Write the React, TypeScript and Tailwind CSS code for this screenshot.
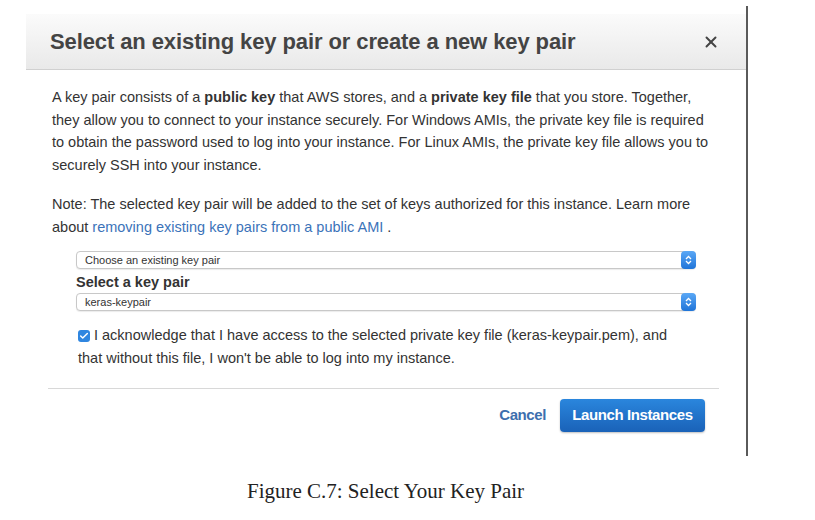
import { Check, X } from 'lucide-react'

function SelectBox({ value }: { value: string }) {
  return (
    <div className="flex h-[18px] w-[620px] items-center rounded-[4px] border border-[#c8c8c8] bg-white shadow-[0_1px_1px_rgba(0,0,0,0.08)]">
      <span className="flex-1 pl-[8px] text-[11px] leading-none text-[#333]">{value}</span>
      <span className="flex h-[18px] w-[15px] flex-col items-center justify-center rounded-[4px] bg-gradient-to-b from-[#5aa8f6] to-[#1e74d8] -mr-px">
        <svg width="7" height="10" viewBox="0 0 7 10" fill="none" stroke="white" strokeWidth="1.3">
          <path d="M1 4 L3.5 1.5 L6 4" />
          <path d="M1 6 L3.5 8.5 L6 6" />
        </svg>
      </span>
    </div>
  )
}

export default function App() {
  return (
    <div className="relative h-[520px] w-[815px] overflow-hidden bg-white font-['Liberation_Sans',Arial,sans-serif] text-[#333]">
      <div className="ml-[26px] mt-[6px] w-[722px] border-r-2 border-[#5a5a5a] pt-[8px] pb-[24px]">
        <div className="flex h-[56px] w-[720px] items-center justify-between border-b border-[#d0d0d0] bg-gradient-to-b from-[#fbfbfb] to-[#e9e9e9] pl-[24px] pr-[26px]">
          <h1 className="text-[22px] font-bold tracking-[-0.1px] text-[#444]">Select an existing key pair or create a new key pair</h1>
          <X size={18} strokeWidth={2.6} className="text-[#444]" />
        </div>

        <div className="pl-[26px] pr-[20px] pt-[16px] text-[14.5px] leading-[22.5px] whitespace-nowrap">
          <p>
            A key pair consists of a <b>public key</b> that AWS stores, and a <b>private key file</b> that you store. Together,
            <br />
            they allow you to connect to your instance securely. For Windows AMIs, the private key file is required
            <br />
            to obtain the password used to log into your instance. For Linux AMIs, the private key file allows you to
            <br />
            securely SSH into your instance.
          </p>
          <p className="mt-[17px]">
            Note: The selected key pair will be added to the set of keys authorized for this instance. Learn more
            <br />
            about <span className="text-[#3b73b9]">removing existing key pairs from a public AMI</span> .
          </p>

          <div className="mt-[13px] pl-[24px]">
            <SelectBox value="Choose an existing key pair" />
            <div className="mt-[4px] text-[14.5px] font-bold leading-[18px] text-[#333]">Select a key pair</div>
            <div className="mt-[2px]">
              <SelectBox value="keras-keypair" />
            </div>
          </div>

          <div className="mt-[13px] pl-[26px]">
            <span className="mr-[4px] inline-flex h-[12px] w-[12px] translate-y-[1px] items-center justify-center rounded-[3px] bg-[#2f86e0]">
              <Check size={10} strokeWidth={3.5} className="text-white" />
            </span>
            I acknowledge that I have access to the selected private key file (keras-keypair.pem), and
            <br />
            that without this file, I won't be able to log into my instance.
          </div>

          <div className="mt-[19px] -ml-[4px] mr-[7px] border-t border-[#d8d8d8]" />

          <div className="mt-[10px] flex items-center justify-end gap-[14px] pr-[21px]">
            <span className="text-[15px] font-bold tracking-[-0.4px] text-[#3d6fae]">Cancel</span>
            <span className="flex h-[33px] w-[145px] items-center justify-center rounded-[4px] bg-gradient-to-b from-[#2a86dd] to-[#1a62b8] text-[15px] font-bold tracking-[-0.4px] text-white shadow-[0_1px_2px_rgba(0,0,0,0.25)]">
              Launch Instances
            </span>
          </div>
        </div>
      </div>

      <div className="mt-[20px] pr-[44px] text-center font-['Liberation_Serif',serif] text-[21px] text-[#222]">
        Figure C.7: Select Your Key Pair
      </div>
    </div>
  )
}
